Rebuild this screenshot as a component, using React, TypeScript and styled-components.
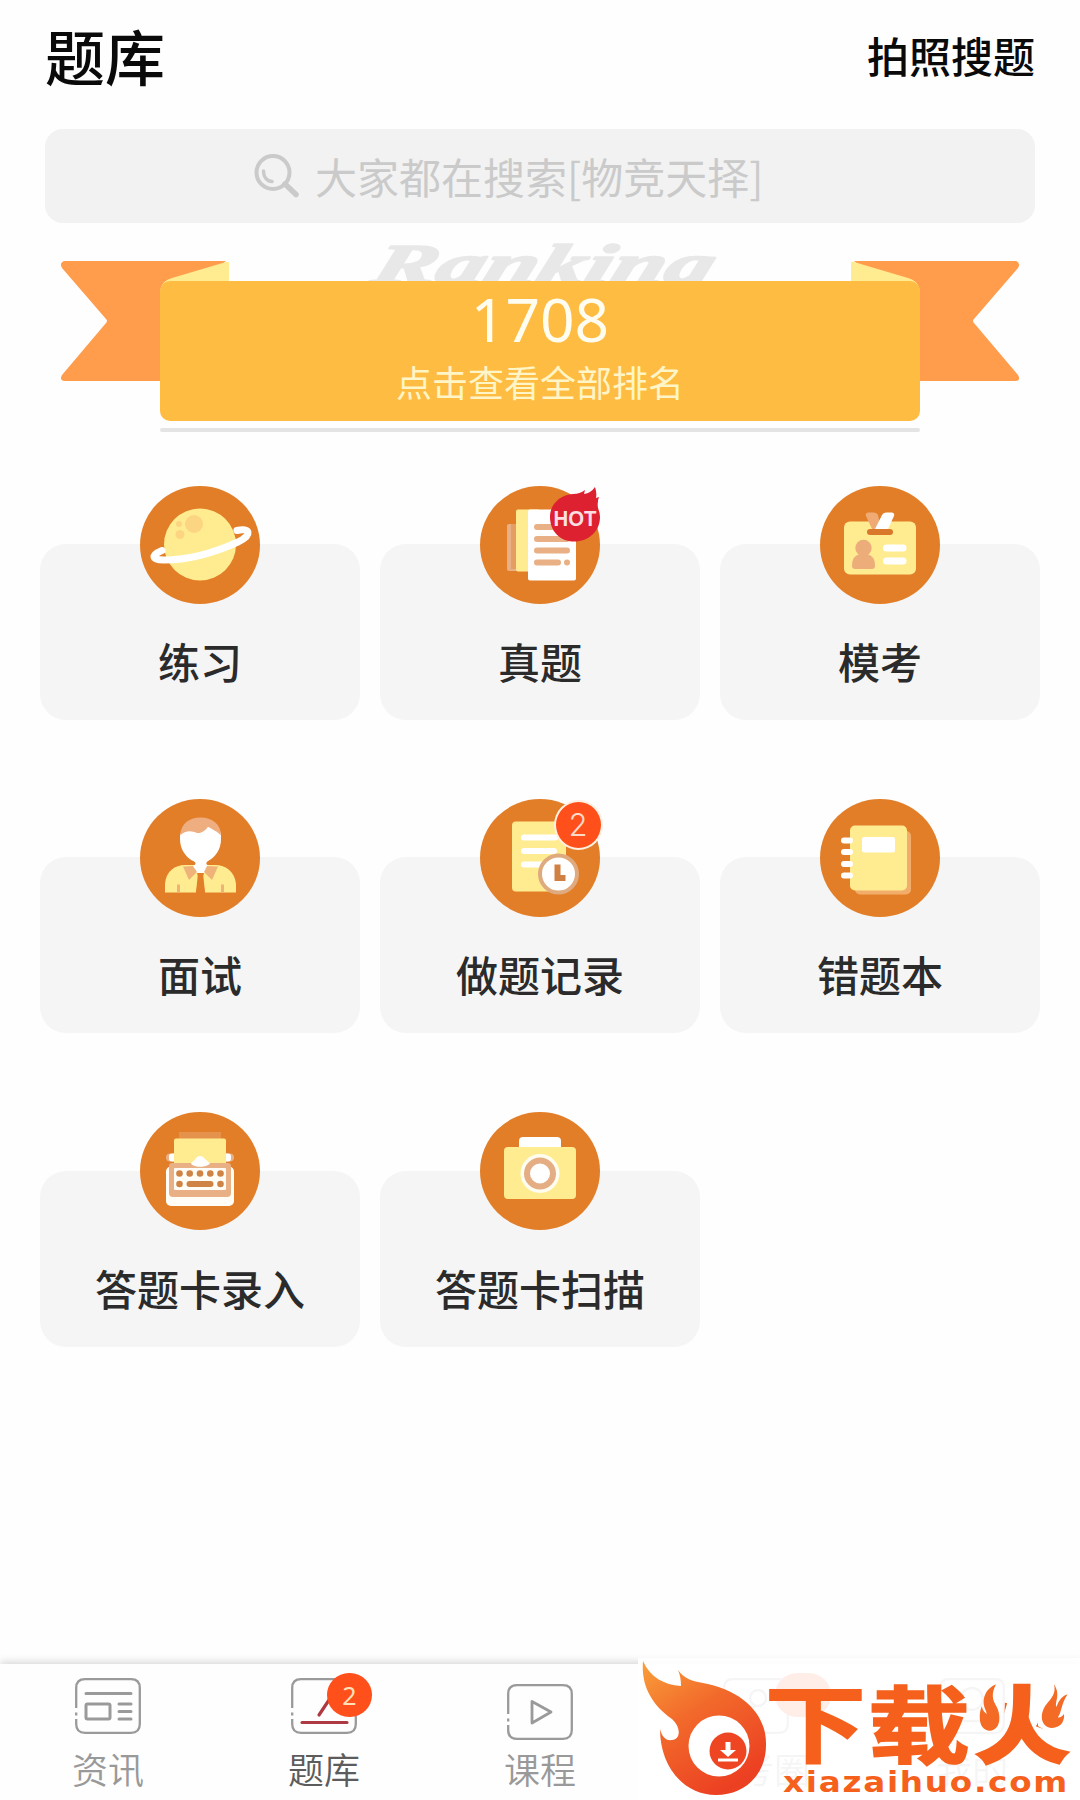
import type { ReactNode } from "react";
import styled, { createGlobalStyle } from "styled-components";

const orange = "#e27e28";
const cream = "#ffec91";
const tan = "#e8b084";

type Feature = {
  label: string;
  icon: ReactNode;
  badge?: ReactNode;
};

export default function App() {
  const features: Feature[] = [
    { label: "练习", icon: <PlanetIcon /> },
    { label: "真题", icon: <PapersIcon />, badge: <HotBadge /> },
    { label: "模考", icon: <IdCardIcon /> },
    { label: "面试", icon: <PersonIcon /> },
    { label: "做题记录", icon: <RecordIcon />, badge: <CountBadge>2</CountBadge> },
    { label: "错题本", icon: <NotebookIcon /> },
    { label: "答题卡录入", icon: <TypewriterIcon /> },
    { label: "答题卡扫描", icon: <CameraIcon /> },
  ];

  return (
    <Screen>
      <GlobalStyle />
      <Header>
        <Title>题库</Title>
        <PhotoSearch>拍照搜题</PhotoSearch>
      </Header>
      <SearchBar>
        <SearchIcon />
        <SearchHint>大家都在搜索[物竞天择]</SearchHint>
      </SearchBar>
      <Ranking>
        <RibbonArt />
        <RankingBox>
          <RankNumber>1708</RankNumber>
          <RankHint>点击查看全部排名</RankHint>
        </RankingBox>
      </Ranking>
      <Grid>
        {features.map(({ label, icon, badge }) => (
          <Card key={label}>
            <IconCircle>
              {icon}
              {badge}
            </IconCircle>
            <CardLabel>{label}</CardLabel>
          </Card>
        ))}
      </Grid>
      <TabBar>
        <Tab>
          <TabIcon>
            <NewsIcon />
          </TabIcon>
          资讯
        </Tab>
        <Tab $active>
          <TabIcon>
            <BankIcon />
            <TabBadge>2</TabBadge>
          </TabIcon>
          题库
        </Tab>
        <Tab>
          <TabIcon $low>
            <CourseIcon />
          </TabIcon>
          课程
        </Tab>
        <Tab>
          <TabIcon>
            <CircleIcon />
            <TabBadge $wide />
          </TabIcon>
          公考圈
        </Tab>
        <Tab>
          <TabIcon>
            <MineIcon />
          </TabIcon>
          我的
        </Tab>
        <SiteMark>
          <SiteLogo />
        </SiteMark>
      </TabBar>
    </Screen>
  );
}

const SearchIcon = () => (
  <svg width="46" height="44" viewBox="0 0 46 44" fill="none" stroke="#cacaca">
    <circle cx="19" cy="18.5" r="16.5" strokeWidth="4" />
    <path d="M31 30L42 40.5" strokeWidth="5.5" strokeLinecap="round" />
    <path d="M9.5 17C9.5 23 13 27 18 27.5" strokeWidth="3.5" strokeLinecap="round" />
  </svg>
);

const RibbonArt = () => (
  <Ribbon width="1080" height="200" viewBox="0 237 1080 200">
    <text
      transform="translate(369 282.5) skewX(-18)"
      fill="#e8e8e8"
      stroke="#e8e8e8"
      strokeWidth="2"
      strokeLinejoin="round"
      fontFamily="Liberation Serif, serif"
      fontStyle="italic"
      fontWeight="700"
      fontSize="56"
      textLength="340"
      lengthAdjust="spacingAndGlyphs"
    >
      Ranking
    </text>
    <path
      d="M64 261H226L200 281V381H64Q59 380 62 375L106 323Q108 321 106 319L62 268Q59 263 64 261Z"
      fill="#ff9d4c"
    />
    <path
      d="M1016 261H854L880 281V381H1016Q1021 380 1018 375L974 323Q972 321 974 319L1018 268Q1021 263 1016 261Z"
      fill="#ff9d4c"
    />
    <path d="M160 294Q160 281 172 278L226 262Q229 261 229 263V290Z" fill={cream} />
    <path d="M920 294Q920 281 908 278L854 262Q851 261 851 263V290Z" fill={cream} />
    <rect x="160" y="428" width="760" height="4" rx="2" fill="#e4e4e4" />
  </Ribbon>
);

const PlanetIcon = () => (
  <svg viewBox="0 0 120 118">
    <circle cx="60" cy="58.5" r="36" fill={cream} />
    <circle cx="54" cy="38" r="9" fill="#fcd583" />
    <circle cx="40" cy="48.5" r="4.5" fill="#fcd583" />
    <circle cx="39" cy="38" r="3" fill="#fcd583" />
    <path
      d="M22 64.5C11 69 11 74 24 74C52 74 76 66 98 56C113 49 110 41 97 44.5"
      fill="none"
      stroke="#fff"
      strokeWidth="7"
      strokeLinecap="round"
    />
  </svg>
);

const PapersIcon = () => (
  <svg viewBox="0 0 120 118">
    <rect x="27" y="38" width="20" height="47" rx="2" fill={tan} />
    <rect x="31" y="38" width="5" height="45" fill="#e59d64" />
    <rect x="36" y="23.5" width="24" height="62" rx="2" fill={cream} />
    <rect x="48" y="23.5" width="48" height="71" rx="2" fill="#fff" />
    <g fill={tan}>
      <rect x="54" y="38" width="36" height="6" rx="3" />
      <rect x="54" y="50" width="36" height="6" rx="3" />
      <rect x="54" y="61.5" width="36" height="6" rx="3" />
      <rect x="54" y="73.5" width="27" height="6" rx="3" />
      <circle cx="87" cy="76.5" r="3" />
    </g>
  </svg>
);

const IdCardIcon = () => (
  <svg viewBox="0 0 120 118">
    <rect x="24" y="35.5" width="72" height="53" rx="6" fill={cream} />
    <path d="M46 30Q45 27 48 26.5H54Q57 26.5 58 29L61 43H52Z" fill="#f0ab75" />
    <path d="M62 29Q63 26.5 66 26.5H72Q75 27 74 30L68 43H55Z" fill="#fff" />
    <rect x="47" y="43" width="26" height="6" rx="3" fill="#d9782a" />
    <circle cx="43.5" cy="62" r="8.2" fill="#ecad7b" />
    <path
      d="M32 80C32 71 36 68 43.5 68S55 71 55 80Q55 83 52 83H35Q32 83 32 80Z"
      fill="#ecad7b"
    />
    <rect x="63" y="58.5" width="23.5" height="7" rx="3.5" fill="#fff" />
    <rect x="63" y="71.5" width="23.5" height="7" rx="3.5" fill="#fff" />
  </svg>
);

const PersonIcon = () => (
  <svg viewBox="0 0 120 118">
    <path
      d="M25 93.5V85C26 72 35 66 45 66H75C86 66 95 73 96 85V93.5H65L63 74H58L56 93.5Z"
      fill={cream}
    />
    <path d="M57 74H64L62.5 79L65 93.5H56L58.5 79Z" fill={orange} />
    <path
      d="M40 35Q50 27 60 30Q70 24 81 34V40C81 51 75 58 69 61.5C66 63 65 65 69 67Q72 74 61 74Q50 74 53 67C57 65 56 63 52 61.5C45 57 40 50 40 40Z"
      fill="#fff"
    />
    <path
      d="M40 36.5C41 24 50 18.5 60.5 18.5C72 18.5 81 25 81 36.5C77 32 73 31 68 27.5C66 31 62 34.500 57 34C52 32 46 30.500 40 36.500Z"
      fill="#efae80"
    />
    <path
      d="M43 67.5L53 67L57 73L49 81ZM78 67.5L67 67L64 73L72 81ZM37 85.5H40V93.5H37ZM81 85.5H84V93.5H81Z"
      fill="#efb379"
    />
  </svg>
);

const RecordIcon = () => (
  <svg viewBox="0 0 120 118">
    <rect x="32" y="22.5" width="54" height="70" rx="4" fill={cream} />
    <g fill="#fff">
      <rect x="41" y="35.5" width="37" height="6" rx="3" />
      <rect x="41" y="49" width="36" height="6" rx="3" />
      <rect x="41" y="62.5" width="25" height="6" rx="3" />
    </g>
    <circle cx="78.5" cy="75" r="18.5" fill="#fff" stroke="#dfaa7e" strokeWidth="4" />
    <path d="M77.5 65.5V79H85.5" fill="none" stroke="#cf8042" strokeWidth="6" />
  </svg>
);

const NotebookIcon = () => (
  <svg viewBox="0 0 120 118">
    <rect x="35" y="32" width="56" height="63.5" rx="5" fill="#f3ad6b" />
    <rect x="30" y="26.5" width="57" height="65" rx="5" fill={cream} />
    <rect x="42" y="38" width="33" height="15.5" rx="2" fill="#fff" />
    <g fill="#fff">
      <rect x="21" y="38.5" width="12" height="6" rx="3" />
      <rect x="21" y="50" width="12" height="6" rx="3" />
      <rect x="21" y="62" width="12" height="6" rx="3" />
      <rect x="21" y="73.5" width="12" height="6" rx="3" />
    </g>
  </svg>
);

const TypewriterIcon = () => (
  <svg viewBox="0 0 120 118">
    <rect x="39" y="20" width="42" height="10" fill="#e4924c" />
    <rect x="26" y="41.5" width="68" height="8" rx="4" fill={tan} />
    <rect x="29" y="41.5" width="62" height="8" rx="3" fill="#fff" />
    <rect x="34" y="26.5" width="52" height="26" rx="2" fill={cream} />
    <rect x="26" y="54.5" width="68" height="39.5" rx="5" fill="#fffdf5" />
    <path d="M29 54Q29 51 32 51H88Q91 51 91 54V81Q91 85 87 85H33Q29 85 29 81Z" fill={tan} />
    <path d="M51 51C55 49 56 44 60 44S66 49 70 51C68 56 52 56 51 51Z" fill="#fff" />
    <rect x="34" y="56" width="52" height="22" rx="1" fill="#fffdf5" />
    <g fill="#cf8345">
      {[39.5, 49.7, 60, 70.3, 80.5].map((x) => (
        <circle key={x} cx={x} cy="61.5" r="3.3" />
      ))}
      <circle cx="39.5" cy="72" r="3.3" />
      <rect x="46.5" y="69" width="27" height="6" rx="3" />
      <circle cx="80.5" cy="72" r="3.3" />
    </g>
  </svg>
);

const CameraIcon = () => (
  <svg viewBox="0 0 120 118">
    <path d="M39 36V29Q39 25 43 25H77Q81 25 81 29V36Z" fill="#fff" />
    <rect x="24" y="35" width="72" height="52" rx="4" fill={cream} />
    <circle cx="60" cy="61.5" r="19.5" fill="#fffdf0" />
    <circle cx="60" cy="61.5" r="13" fill="#fff" stroke="#e4ad84" strokeWidth="6" />
  </svg>
);

const HotBadge = () => (
  <HotMark viewBox="0 0 52 56">
    <path
      d="M25 55.5C11 55.5 1 45 1 31C1 18 11 9 24 8Q31 8 36 4L35 8Q42 7 46 1Q48 7 47 12L50 11Q48 16 49 22Q51 27 51 31C51 45 40 55.5 25 55.5Z"
      fill="#de2130"
    />
    <text
      x="26"
      y="40"
      fill="#fbdfe3"
      textAnchor="middle"
      fontFamily="Liberation Sans, sans-serif"
      fontWeight="700"
      fontSize="22"
      textLength="43"
      lengthAdjust="spacingAndGlyphs"
    >
      HOT
    </text>
  </HotMark>
);

// Rounded square with a broken left edge, shared by all tab icons
const TabFrame = ({ children }: { children?: ReactNode }) => (
  <svg width="66" height="56" viewBox="0 0 66 56" fill="none" stroke="#9a9a9a" strokeWidth="2.3">
    <path d="M1.2 30V10Q1.2 1.2 10 1.2H56Q64.8 1.2 64.8 10V46Q64.8 54.8 56 54.8H10Q1.2 54.8 1.2 46V41M1.2 34.5V37.5" />
    {children}
  </svg>
);

const NewsIcon = () => (
  <TabFrame>
    <g strokeLinecap="round" strokeWidth="3">
      <path d="M11 15.5H56M44 26H56M44 33.5H56M44 41H56" />
      <rect x="11" y="26" width="24" height="15" rx="1.5" />
    </g>
  </TabFrame>
);

const BankIcon = () => (
  <TabFrame>
    <path
      d="M11 44.5H56M28 37L42 16"
      stroke="#ad3a43"
      strokeWidth="3.2"
      strokeLinecap="round"
    />
  </TabFrame>
);

const CourseIcon = () => (
  <TabFrame>
    <path d="M25 17.5V39L44 28Z" strokeWidth="2.8" strokeLinejoin="round" />
  </TabFrame>
);

const CircleIcon = () => (
  <TabFrame>
    <circle cx="35" cy="20" r="8" />
    <path d="M18 42Q22 30 33 28" />
  </TabFrame>
);

const MineIcon = () => (
  <TabFrame>
    <circle cx="33" cy="21" r="11" />
    <path d="M16 43H50" />
  </TabFrame>
);

const SiteLogo = () => (
  <svg width="442" height="142" viewBox="638 1658 442 142">
    <defs>
      <linearGradient id="flame" x1="0" y1="0" x2="0.6" y2="1">
        <stop offset="0" stopColor="#f9a03a" />
        <stop offset="0.45" stopColor="#f26a2b" />
        <stop offset="1" stopColor="#ec4022" />
      </linearGradient>
      {/* the side strokes of 火 give way to two small flames */}
      <clipPath id="fireBody">
        <path d="M1006 1670H1037L1038 1726L1080 1752V1800H968V1752L1004 1730Z" />
      </clipPath>
    </defs>
    <path
      d="M643 1661C650 1677 664 1685 681 1686Q681 1677 678 1670C684 1679 693 1681 703 1683C742 1690 766 1714 766 1743C767 1773 746 1795 716 1795C684 1795 660 1767 660 1729C662 1737 666 1741 672 1740C681 1739 681 1727 672 1719C651 1704 641 1685 643 1661Z"
      fill="url(#flame)"
    />
    <circle cx="719" cy="1746" r="30.5" fill="#fff" />
    <circle cx="728" cy="1751" r="18.5" fill="#ee4523" />
    <path d="M725.5 1742H730.5V1750H736L728 1757L720 1750H725.5Z" fill="#fff" />
    <rect x="718" y="1758.5" width="20" height="3" fill="#fff" />
    <g
      fill="#f5611c"
      stroke="#f5611c"
      strokeWidth="2"
      fontFamily="Noto Sans CJK SC, sans-serif"
      fontWeight="700"
      fontSize="96"
    >
      <text transform="translate(765 1756) scale(1.05 0.88)">下</text>
      <text transform="translate(868 1757) scale(1.06 0.87)">载</text>
      <g clipPath="url(#fireBody)">
        <text strokeWidth="5" transform="translate(976 1755.5) scale(0.96 0.86)">
          火
        </text>
      </g>
    </g>
    <g fill="#f36b25" transform="translate(630 1640) scale(0.3333)">
      <path d="M1098 133C1072 145 1060 165 1061 190C1062 205 1070 212 1070 222C1062 216 1056 208 1056 198C1046 220 1048 250 1058 262C1070 277 1092 276 1103 258C1113 240 1108 212 1097 195C1082 170 1090 150 1098 133Z" />
      <path d="M1272 133C1280 160 1262 178 1250 192C1236 210 1230 235 1242 252C1255 270 1285 266 1297 248C1303 236 1303 230 1302 222C1296 230 1290 234 1284 232C1296 215 1292 195 1313 163C1298 168 1288 178 1280 200C1272 190 1294 165 1272 133Z" />
    </g>
    <text
      x="783"
      y="1791.5"
      fill="#f5611c"
      fontFamily="DejaVu Sans, sans-serif"
      fontWeight="700"
      fontSize="28"
      letterSpacing="1.5"
      textLength="286"
      lengthAdjust="spacingAndGlyphs"
    >
      xiazaihuo.com
    </text>
  </svg>
);

const GlobalStyle = createGlobalStyle`
  * {
    box-sizing: border-box;
  }
  body {
    margin: 0;
    background-color: white;
    font-family: "Noto Sans CJK SC", sans-serif;
  }
`;

const Screen = styled.div`
  display: flex;
  flex-flow: column nowrap;
  width: 1080px;
  height: 1800px;
  overflow: hidden;
  background-color: #fefefe;
`;

const Header = styled.header`
  display: flex;
  justify-content: space-between;
  align-items: center;
  height: 129px;
  padding: 0 45px 20px;
  color: #0a0a0a;
`;

const Title = styled.h1`
  margin: 0;
  font-size: 60px;
  font-weight: 500;
  line-height: 1;
`;

const PhotoSearch = styled.span`
  font-size: 42px;
  font-weight: 500;
  line-height: 1;
`;

const SearchBar = styled.div`
  display: flex;
  align-items: center;
  gap: 15px;
  height: 94px;
  margin: 0 45px;
  padding-left: 209px;
  border-radius: 18px;
  background-color: #f2f2f2;
  color: #cacaca;
`;

const SearchHint = styled.span`
  font-size: 42px;
  line-height: 1;
`;

const Ranking = styled.section`
  position: relative;
  height: 200px;
  margin-top: 14px;
  padding: 44px 160px 0;
`;

const Ribbon = styled.svg`
  position: absolute;
  inset: 0;
`;

const RankingBox = styled.div`
  position: relative;
  display: flex;
  flex-flow: column nowrap;
  align-items: center;
  height: 140px;
  padding-top: 8px;
  border-radius: 10px;
  background-color: #ffbc43;
`;

const RankNumber = styled.strong`
  color: #fffdf0;
  font-family: "Noto Sans", sans-serif;
  font-size: 60.5px;
  font-weight: 450;
  line-height: 60px;
`;

const RankHint = styled.span`
  margin-top: 14px;
  color: #fff5c6;
  font-size: 36px;
  font-weight: 400;
  line-height: 36px;
`;

const Grid = styled.div`
  display: grid;
  grid-template-columns: repeat(3, 320px);
  grid-auto-rows: 176px;
  gap: 137.25px 20px;
  margin: 107px 40px 0;
`;

const Card = styled.div`
  display: flex;
  flex-flow: column nowrap;
  align-items: center;
  border-radius: 26px;
  background-color: #f5f5f5;
`;

const IconCircle = styled.div`
  position: relative;
  width: 120px;
  height: 118px;
  margin-top: -58.5px;
  border-radius: 50%;
  background-color: ${orange};

  > svg:first-child {
    display: block;
    width: 120px;
    height: 118px;
  }
`;

const CardLabel = styled.span`
  margin-top: 36.5px;
  color: #2b2b2b;
  font-size: 42px;
  font-weight: 500;
  line-height: 42px;
`;

const CountBadge = styled.span`
  position: absolute;
  top: 1px;
  right: -2.5px;
  display: flex;
  justify-content: center;
  align-items: center;
  width: 49px;
  height: 50px;
  border: 2.5px solid #fff0e0;
  border-radius: 50%;
  background-color: #ff4f1b;
  color: #ffd9c8;
  font-family: Inter, sans-serif;
  font-size: 31px;
  font-weight: 300;
`;

const HotMark = styled.svg`
  position: absolute;
  top: 0;
  right: -1px;
  width: 52px;
  height: 56px;
`;

const TabBar = styled.nav`
  position: relative;
  display: flex;
  height: 136px;
  margin-top: auto;
  background-color: #fefefe;
  box-shadow: 0 -2px 8px rgba(0, 0, 0, 0.16);
`;

const Tab = styled.div<{ $active?: boolean }>`
  display: flex;
  flex-flow: column nowrap;
  align-items: center;
  width: 216px;
  padding-top: 14px;
  color: ${({ $active }) => ($active ? "#5c5c5c" : "#999")};
  font-size: 36px;
  font-weight: 350;
  line-height: 36px;
`;

const TabIcon = styled.div<{ $low?: boolean }>`
  position: relative;
  height: 72px;
  padding-top: ${({ $low }) => ($low ? 6 : 0)}px;
`;

const TabBadge = styled.span<{ $wide?: boolean }>`
  position: absolute;
  top: -5px;
  left: ${({ $wide }) => ($wide ? 52 : 36)}px;
  display: flex;
  justify-content: center;
  align-items: center;
  width: ${({ $wide }) => ($wide ? 56 : 45)}px;
  height: 44px;
  border-radius: 22px;
  background-color: #ff4f1b;
  color: #ffe0b8;
  font-family: "Noto Sans", sans-serif;
  font-size: 25px;
  font-weight: 400;
`;

const SiteMark = styled.div`
  position: absolute;
  top: -6px;
  right: 0;
  height: 142px;
  background-color: rgba(255, 255, 255, 0.9);
`;
